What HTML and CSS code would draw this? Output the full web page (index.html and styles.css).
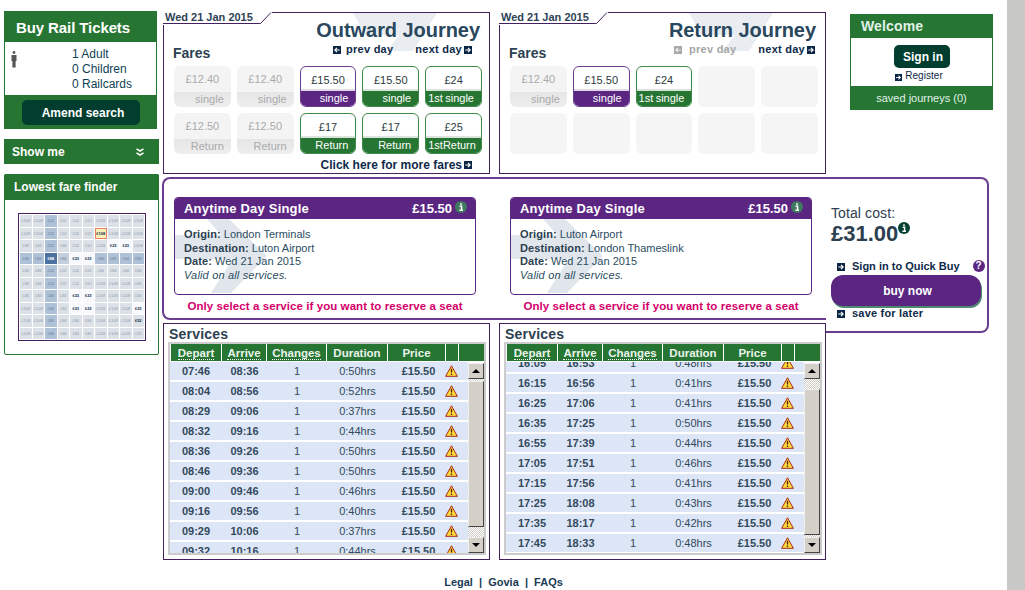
FILE: index.html
```html
<!DOCTYPE html>
<html lang="en">
<head>
<meta charset="utf-8">
<title>Buy Rail Tickets</title>
<link rel="stylesheet" href="styles.css">
</head>
<body>
<svg class="defs" width="0" height="0" aria-hidden="true">
  <symbol id="arrow" viewBox="0 0 9 9"><rect width="9" height="9" fill="#0b2545"/><path d="M1.5 4.5H6M4.5 2.2 6.9 4.5 4.5 6.8" fill="none" stroke="#fff" stroke-width="1.3"/></symbol>
  <symbol id="arrow-l" viewBox="0 0 9 9"><rect width="9" height="9" fill="#0b2545"/><path d="M7.5 4.5H3M4.5 2.2 2.1 4.5 4.5 6.8" fill="none" stroke="#fff" stroke-width="1.3"/></symbol>
  <symbol id="arrow-off" viewBox="0 0 9 9"><rect width="9" height="9" fill="#a8a8a8"/><path d="M7.5 4.5H3M4.5 2.2 2.1 4.5 4.5 6.8" fill="none" stroke="#eee" stroke-width="1.3"/></symbol>
  <symbol id="warn" viewBox="0 0 13 12"><path d="M6.5 .8 12.4 11.3H.6Z" fill="#ffdc3c" stroke="#a5281c" stroke-width="1" stroke-linejoin="round"/><path d="M6.5 3.8V7.6M6.5 8.6V10" stroke="#5a2010" stroke-width="1.4"/></symbol>
  <symbol id="info-g" viewBox="0 0 12 12"><circle cx="6" cy="6" r="6" fill="#3f7a5f"/><path d="M6 2.2V4M4.6 5.2H6.6V9M4.4 9.2H8" fill="none" stroke="#fff" stroke-width="1.5"/></symbol>
  <symbol id="info-d" viewBox="0 0 12 12"><circle cx="6" cy="6" r="6" fill="#01412f"/><path d="M6 2.2V4M4.6 5.2H6.6V9M4.4 9.2H8" fill="none" stroke="#fff" stroke-width="1.5"/></symbol>
  <symbol id="mark-card" viewBox="0 0 92 76"><path d="M0 16H46L32 0H54L92 37 56 74H36L58 40H0Z" fill="#e1e6ed"/></symbol>
  <symbol id="mark-top" viewBox="0 0 84 38"><path d="M0 0H84L60 38H34L46 22H12Z" fill="#e9edf2"/></symbol>
</svg>

<div class="page">
  <aside class="left">
    <section class="buy">
      <h2 class="buy-title">Buy Rail Tickets</h2>
      <div class="buy-body">
        <svg class="person" width="6" height="17" viewBox="0 0 6 17"><circle cx="3" cy="1.5" r="1.4" fill="#555"/><path d="M.5 4H5.5V10H4.6V16.5H1.4V10H.5Z" fill="#555"/></svg>
        <ul class="party"><li>1 Adult</li><li>0 Children</li><li>0 Railcards</li></ul>
      </div>
      <a class="btn amend">Amend search</a>
    </section>
    <section class="showme">
      <span>Show me</span>
      <svg width="8" height="8" viewBox="0 0 8 8"><path d="M.5 .8 4 3 7.5 .8M.5 4.8 4 7 7.5 4.8" fill="none" stroke="#fff" stroke-width="1.5"/></svg>
    </section>
    <section class="finder">
      <h3 class="finder-title">Lowest fare finder</h3>
      <div class="finder-body">
        <div class="matrix">
          <i>£108</i><i>£108</i><i class="m">£52</i><i>£52</i><i>£52</i><i>£52</i><i>£108</i><i>£108</i><i>£108</i><i>£108</i>
          <i>£108</i><i>£108</i><i class="m">£52</i><i>£52</i><i>£52</i><i>£52</i><i class="s">£108</i><i>£108</i><i>£108</i><i>£108</i>
          <i>£84</i><i>£84</i><i class="m">£52</i><i>£84</i><i>£52</i><i>£52</i><i>£108</i><i class="w">£23</i><i class="w">£23</i><i>£108</i>
          <i class="m">£84</i><i class="m">£84</i><i class="d">£84</i><i class="m2">£84</i><i class="w">£23</i><i class="w">£23</i><i class="m">£84</i><i class="m">£84</i><i class="m">£84</i><i class="m">£84</i>
          <i>£84</i><i>£84</i><i class="m">£52</i><i>£52</i><i>£52</i><i>£52</i><i>£84</i><i>£84</i><i>£84</i><i>£84</i>
          <i>£84</i><i>£84</i><i class="m">£52</i><i>£52</i><i>£52</i><i>£52</i><i>£108</i><i>£108</i><i>£108</i><i>£84</i>
          <i>£84</i><i>£84</i><i class="m">£84</i><i>£84</i><i class="w">£23</i><i class="w">£23</i><i>£108</i><i>£108</i><i>£108</i><i>£84</i>
          <i>£108</i><i>£108</i><i class="m">£84</i><i>£84</i><i class="w">£23</i><i class="w">£23</i><i>£108</i><i>£108</i><i>£108</i><i class="w">£23</i>
          <i>£108</i><i>£108</i><i class="m">£84</i><i>£84</i><i>£84</i><i>£84</i><i>£108</i><i>£108</i><i>£108</i><i class="w2">£52</i>
          <i>£108</i><i>£108</i><i class="m">£84</i><i>£84</i><i>£84</i><i>£84</i><i>£108</i><i>£108</i><i>£108</i><i>£52</i>
        </div>
      </div>
    </section>
  </aside>

  <div class="journeys">
    <section class="journey out">
      <svg class="mark-top" width="84" height="38"><use href="#mark-top"/></svg>
      <div class="tab"><svg class="tab-line" width="109" height="13" viewBox="0 0 109 13"><path d="M0 11.5H97.5L108 .5" fill="none" stroke="#45205f"/></svg><span>Wed 21 Jan 2015</span></div>
      <div class="j-head">
        <h3 class="fares">Fares</h3>
        <div class="j-right">
          <h2 class="j-title">Outward Journey</h2>
          <div class="daynav">
            <a class="day"><svg class="ar"><use href="#arrow-l"/></svg>prev day</a>
            <a class="day">next day<svg class="ar"><use href="#arrow"/></svg></a>
          </div>
        </div>
      </div>
      <div class="tiles">
        <div class="tile off"><b>£12.40</b><span class="band">single</span></div>
        <div class="tile off"><b>£12.40</b><span class="band">single</span></div>
        <div class="tile sel"><b>£15.50</b><span class="band">single</span></div>
        <div class="tile on"><b>£15.50</b><span class="band">single</span></div>
        <div class="tile on"><b>£24</b><span class="band two"><em>1st</em><em>single</em></span></div>
        <div class="tile off"><b>£12.50</b><span class="band">Return</span></div>
        <div class="tile off"><b>£12.50</b><span class="band">Return</span></div>
        <div class="tile on"><b>£17</b><span class="band">Return</span></div>
        <div class="tile on"><b>£17</b><span class="band">Return</span></div>
        <div class="tile on"><b>£25</b><span class="band two"><em>1st</em><em>Return</em></span></div>
      </div>
      <a class="more">Click here for more fares<svg class="ar"><use href="#arrow"/></svg></a>
    </section>

    <section class="journey ret">
      <svg class="mark-top" width="84" height="38"><use href="#mark-top"/></svg>
      <div class="tab"><svg class="tab-line" width="109" height="13" viewBox="0 0 109 13"><path d="M0 11.5H97.5L108 .5" fill="none" stroke="#45205f"/></svg><span>Wed 21 Jan 2015</span></div>
      <div class="j-head">
        <h3 class="fares">Fares</h3>
        <div class="j-right">
          <h2 class="j-title">Return Journey</h2>
          <div class="daynav">
            <a class="day dis"><svg class="ar"><use href="#arrow-off"/></svg>prev day</a>
            <a class="day">next day<svg class="ar"><use href="#arrow"/></svg></a>
          </div>
        </div>
      </div>
      <div class="tiles">
        <div class="tile off"><b>£12.40</b><span class="band">single</span></div>
        <div class="tile sel"><b>£15.50</b><span class="band">single</span></div>
        <div class="tile on"><b>£24</b><span class="band two"><em>1st</em><em>single</em></span></div>
        <div class="tile none"></div>
        <div class="tile none"></div>
        <div class="tile none"></div>
        <div class="tile none"></div>
        <div class="tile none"></div>
        <div class="tile none"></div>
        <div class="tile none"></div>
      </div>
    </section>
  </div>

  <section class="welcome">
    <h3 class="welcome-title">Welcome</h3>
    <div class="welcome-body">
      <a class="btn signin">Sign in</a>
      <a class="register"><svg class="ar"><use href="#arrow"/></svg>Register</a>
    </div>
    <div class="saved">saved journeys (0)</div>
  </section>

  <div class="summary">
    <div class="tickets">
      <div class="ticket">
        <div class="card">
          <svg class="mark-card" width="92" height="76"><use href="#mark-card"/></svg>
          <div class="card-head"><span>Anytime Day Single</span><span class="card-price">£15.50<svg class="inf"><use href="#info-g"/></svg></span></div>
          <div class="card-body">
            <p><b>Origin:</b> London Terminals</p>
            <p><b>Destination:</b> Luton Airport</p>
            <p><b>Date:</b> Wed 21 Jan 2015</p>
            <p><i>Valid on all services.</i></p>
          </div>
        </div>
        <p class="notice">Only select a service if you want to reserve a seat</p>
      </div>
      <div class="ticket">
        <div class="card">
          <svg class="mark-card" width="92" height="76"><use href="#mark-card"/></svg>
          <div class="card-head"><span>Anytime Day Single</span><span class="card-price">£15.50<svg class="inf"><use href="#info-g"/></svg></span></div>
          <div class="card-body">
            <p><b>Origin:</b> Luton Airport</p>
            <p><b>Destination:</b> London Thameslink</p>
            <p><b>Date:</b> Wed 21 Jan 2015</p>
            <p><i>Valid on all services.</i></p>
          </div>
        </div>
        <p class="notice">Only select a service if you want to reserve a seat</p>
      </div>
    </div>
    <div class="checkout">
      <p class="total-label">Total cost:</p>
      <p class="total">£31.00<svg class="inf-big"><use href="#info-d"/></svg></p>
      <div class="quick"><svg class="ar"><use href="#arrow"/></svg><a>Sign in to Quick Buy</a><span class="help">?</span></div>
      <a class="buynow">buy now</a>
      <div class="later"><svg class="ar"><use href="#arrow"/></svg><a>save for later</a></div>
    </div>
  </div>

  <div class="services-row">
    <section class="services">
      <h3 class="services-title">Services</h3>
      <div class="frame">
        <div class="thead"><span><u>Depart</u></span><span><u>Arrive</u></span><span><u>Changes</u></span><span>Duration</span><span>Price</span><span></span><span></span></div>
        <div class="tbody">
          <div class="rows">
            <div class="row"><b>07:46</b><b>08:36</b><span>1</span><span>0:50hrs</span><b class="pr">£15.50</b><svg class="warn"><use href="#warn"/></svg></div>
            <div class="row"><b>08:04</b><b>08:56</b><span>1</span><span>0:52hrs</span><b class="pr">£15.50</b><svg class="warn"><use href="#warn"/></svg></div>
            <div class="row"><b>08:29</b><b>09:06</b><span>1</span><span>0:37hrs</span><b class="pr">£15.50</b><svg class="warn"><use href="#warn"/></svg></div>
            <div class="row"><b>08:32</b><b>09:16</b><span>1</span><span>0:44hrs</span><b class="pr">£15.50</b><svg class="warn"><use href="#warn"/></svg></div>
            <div class="row"><b>08:36</b><b>09:26</b><span>1</span><span>0:50hrs</span><b class="pr">£15.50</b><svg class="warn"><use href="#warn"/></svg></div>
            <div class="row"><b>08:46</b><b>09:36</b><span>1</span><span>0:50hrs</span><b class="pr">£15.50</b><svg class="warn"><use href="#warn"/></svg></div>
            <div class="row"><b>09:00</b><b>09:46</b><span>1</span><span>0:46hrs</span><b class="pr">£15.50</b><svg class="warn"><use href="#warn"/></svg></div>
            <div class="row"><b>09:16</b><b>09:56</b><span>1</span><span>0:40hrs</span><b class="pr">£15.50</b><svg class="warn"><use href="#warn"/></svg></div>
            <div class="row"><b>09:29</b><b>10:06</b><span>1</span><span>0:37hrs</span><b class="pr">£15.50</b><svg class="warn"><use href="#warn"/></svg></div>
            <div class="row"><b>09:32</b><b>10:16</b><span>1</span><span>0:44hrs</span><b class="pr">£15.50</b><svg class="warn"><use href="#warn"/></svg></div>
          </div>
          <div class="sbar at-top">
            <span class="sbtn"><span class="up"></span></span>
            <span class="thumb"></span>
            <span class="sbtn"><span class="down"></span></span>
          </div>
        </div>
      </div>
    </section>
    <section class="services">
      <h3 class="services-title">Services</h3>
      <div class="frame">
        <div class="thead"><span><u>Depart</u></span><span><u>Arrive</u></span><span><u>Changes</u></span><span>Duration</span><span>Price</span><span></span><span></span></div>
        <div class="tbody">
          <div class="rows scrolled">
            <div class="row"><b>16:05</b><b>16:53</b><span>1</span><span>0:48hrs</span><b class="pr">£15.50</b><svg class="warn"><use href="#warn"/></svg></div>
            <div class="row"><b>16:15</b><b>16:56</b><span>1</span><span>0:41hrs</span><b class="pr">£15.50</b><svg class="warn"><use href="#warn"/></svg></div>
            <div class="row"><b>16:25</b><b>17:06</b><span>1</span><span>0:41hrs</span><b class="pr">£15.50</b><svg class="warn"><use href="#warn"/></svg></div>
            <div class="row"><b>16:35</b><b>17:25</b><span>1</span><span>0:50hrs</span><b class="pr">£15.50</b><svg class="warn"><use href="#warn"/></svg></div>
            <div class="row"><b>16:55</b><b>17:39</b><span>1</span><span>0:44hrs</span><b class="pr">£15.50</b><svg class="warn"><use href="#warn"/></svg></div>
            <div class="row"><b>17:05</b><b>17:51</b><span>1</span><span>0:46hrs</span><b class="pr">£15.50</b><svg class="warn"><use href="#warn"/></svg></div>
            <div class="row"><b>17:15</b><b>17:56</b><span>1</span><span>0:41hrs</span><b class="pr">£15.50</b><svg class="warn"><use href="#warn"/></svg></div>
            <div class="row"><b>17:25</b><b>18:08</b><span>1</span><span>0:43hrs</span><b class="pr">£15.50</b><svg class="warn"><use href="#warn"/></svg></div>
            <div class="row"><b>17:35</b><b>18:17</b><span>1</span><span>0:42hrs</span><b class="pr">£15.50</b><svg class="warn"><use href="#warn"/></svg></div>
            <div class="row"><b>17:45</b><b>18:33</b><span>1</span><span>0:48hrs</span><b class="pr">£15.50</b><svg class="warn"><use href="#warn"/></svg></div>
          </div>
          <div class="sbar at-end">
            <span class="sbtn"><span class="up"></span></span>
            <span class="thumb"></span>
            <span class="sbtn"><span class="down"></span></span>
          </div>
        </div>
      </div>
    </section>
  </div>

  <footer class="foot"><a>Legal</a> &nbsp;|&nbsp; <a>Govia</a> &nbsp;|&nbsp; <a>FAQs</a></footer>
</div>
<div class="rail"></div>
</body>
</html>
```

FILE: styles.css
```css
* { box-sizing: border-box; }
html, body { margin: 0; height: 590px; overflow: hidden; }
body { display: flex; background: #fff; font-family: "Liberation Sans", Arial, sans-serif; font-size: 11px; color: #2b4153; }
h2, h3, p, ul { margin: 0; padding: 0; }
ul { list-style: none; }
.defs { position: absolute; }
.rail { width: 18px; height: 590px; background: #c8c9c6; }
.page { width: 1007px; height: 590px; padding: 11px 0 0 4px; display: grid; grid-template-columns: 158px 664px 1fr; grid-template-rows: auto auto auto auto; align-content: start; }
.ar { width: 8px; height: 8px; flex: none; }

/* left column */
.left { grid-column: 1; grid-row: 1 / 5; width: 155px; }
.buy { width: 153px; height: 118px; background: #277533; }
.buy-title { height: 31px; padding-left: 12px; font-size: 15px; letter-spacing: -.1px; line-height: 34px; color: #fff; }
.buy-body { margin: 0 1px; height: 53px; background: #fff; display: flex; padding: 8px 0 0 6px; }
.person { margin-top: 1px; }
.party { margin-left: 55px; font-size: 12px; line-height: 15px; color: #0f3f55; margin-top: -3px; }
.btn { display: flex; align-items: center; justify-content: center; background: #013e30; color: #fff; font-weight: bold; font-size: 12px; border-radius: 5px; }
.amend { width: 118px; height: 25px; margin: 5px 0 0 18px; padding-left: 4px; }
.showme { margin-top: 10px; height: 25px; background: #277533; color: #fff; font-size: 12px; font-weight: bold; display: flex; align-items: center; justify-content: space-between; padding: 0 15px 0 8px; }
.finder { margin-top: 10px; height: 181px; border: 1px solid #277533; border-radius: 2px; }
.finder-title { height: 26px; margin: -1px -1px 0; background: #277533; color: #fff; font-size: 12px; line-height: 26px; padding-left: 10px; border-radius: 2px 2px 0 0; }
.finder-body { padding: 13px 0 0 13px; }
.matrix { width: 128px; height: 128px; border: 1px solid #45205f; padding: 1px; display: grid; grid-template-columns: repeat(10, 1fr); grid-template-rows: repeat(10, 1fr); gap: 1px; }
.matrix i { font-style: normal; font-size: 4px; line-height: 11px; text-align: center; background: #dce1e7; color: #8e9cae; overflow: hidden; }
.matrix .m { background: #aec1d6; color: #6b8099; }
.matrix .m2 { background: #c3cfdd; color: #6a7f97; }
.matrix .d { background: #4d72a2; color: #fff; font-weight: bold; }
.matrix .w { background: #f7f9fc; color: #0e2a4a; font-weight: bold; }
.matrix .w2 { background: #dce1e7; color: #0e2a4a; font-weight: bold; }
.matrix .s { background: #f5f1b8; color: #0e2a4a; font-weight: bold; outline: 1px solid #e8825f; outline-offset: -1px; }

/* journey panels */
.journeys { grid-column: 2; grid-row: 1; margin-top: 1px; padding-left: 1px; display: flex; gap: 9px; }
.journey { position: relative; width: 327px; height: 162px; border: 1px solid #45205f; padding: 0 9px 0 10px; display: flex; flex-direction: column; }
.tab { position: absolute; left: -1px; top: -1px; width: 109px; height: 13px; background: #fff; }
.tab span { position: relative; display: block; padding-left: 2px; font-size: 11px; font-weight: bold; line-height: 10px; color: #2e4356; }
.tab-line { position: absolute; left: 0; top: 0; }
.mark-top { position: absolute; left: 189px; top: 0; }
.j-head { position: relative; height: 53px; display: flex; justify-content: space-between; }
.fares { margin: 32px 0 0 -1px; font-size: 14px; line-height: 16px; color: #2c4050; }
.j-right { display: flex; flex-direction: column; align-items: flex-end; padding-top: 6px; }
.j-title { font-size: 20px; letter-spacing: -.05px; line-height: 23px; color: #29475d; }
.daynav { display: flex; gap: 22px; margin-top: 1px; font-size: 11px; letter-spacing: .25px; font-weight: bold; line-height: 13px; color: #0e2a4a; }
.out .daynav { margin-right: 8px; }
.ret .daynav { margin-right: 1px; }
.day { display: flex; align-items: center; gap: 5px; }
.day:last-child { gap: 2px; }
.dis { color: #a6a6a6; gap: 7px; }
.tiles { position: relative; display: grid; grid-template-columns: repeat(5, 56.8px); grid-auto-rows: 41px; gap: 6px; }
.tile { border-radius: 6px; display: flex; flex-direction: column; overflow: hidden; font-size: 11px; }
.tile b { flex: 1 1 0; min-height: 0; font-weight: normal; text-align: center; line-height: 27px; }
.band { flex: none; height: 15px; line-height: 15px; text-align: right; padding: 0 7px 0 2px; }
.two { display: flex; justify-content: space-between; }
.two em { font-style: normal; }
.off { background: #f4f4f4; }
.off b { color: #aaa; }
.off .band { background: linear-gradient(#e6e6e6, #eee); color: #aaa; }
.on { border: 1px solid #3d8a4a; background: #fff; }
.on b { color: #2b3a40; box-shadow: inset 0 -2px 1px #d9e2da; }
.on .band { background: #277533; color: #fff; }
.sel { border: 1px solid #6b3d8f; background: #fff; }
.sel b { color: #2b3a40; box-shadow: inset 0 -2px 1px #e0d8e6; }
.sel .band { background: #5b2682; color: #fff; }
.none { background: #f5f5f5; }
.more { position: relative; align-self: flex-end; display: flex; align-items: center; gap: 2px; margin: 5px 8px 0 0; font-size: 12px; font-weight: bold; line-height: 12px; color: #0e2a4a; }

/* welcome */
.welcome { grid-column: 3; grid-row: 1; width: 143px; height: 96px; margin: 3px 0 0 24px; background: #277533; }
.welcome-title { height: 24px; padding-left: 11px; font-size: 14px; letter-spacing: .15px; line-height: 25px; color: #e0f2ea; }
.welcome-body { margin: 0 1px; height: 48px; background: #fff; display: flex; flex-direction: column; align-items: center; padding-top: 7px; }
.signin { width: 56px; height: 23px; padding-left: 3px; }
.register { display: flex; align-items: center; gap: 3px; margin: 2px 0 0 -5px; font-size: 10px; letter-spacing: .05px; line-height: 12px; color: #0e2a4a; }
.register .ar { width: 7px; height: 7px; margin-top: 2px; }
.saved { text-align: center; line-height: 24px; color: #e0f2ea; }

/* summary */
.summary { grid-column: 2 / 4; grid-row: 2; margin-top: 3px; display: flex; align-items: flex-start; }
.tickets { width: 664px; height: 143px; border: 2px solid #6b3d8f; border-right: 0; border-radius: 8px 0 0 8px; padding: 18px 0 0 10px; display: flex; gap: 34px; }
.ticket { width: 302px; }
.card { position: relative; height: 98px; border: 1px solid #5b2682; border-radius: 4px; overflow: hidden; }
.mark-card { position: absolute; left: 0; top: 21px; }
.card-head { position: relative; height: 22px; margin: -1px -1px 0; background: #5b2682; color: #fff; font-size: 13px; letter-spacing: .2px; font-weight: bold; line-height: 23px; display: flex; justify-content: space-between; padding: 0 9px 0 10px; }
.card-price { display: flex; align-items: center; gap: 3px; letter-spacing: 0; }
.inf { width: 12px; height: 12px; margin-top: -2px; }
.card-body { position: relative; padding: 9px 0 0 9px; font-size: 11px; line-height: 13.7px; color: #2b4d63; }
.card-body b { color: #2c4050; letter-spacing: .1px; }
.card-body i { letter-spacing: .17px; }
.notice { margin-top: 4px; text-align: center; font-size: 11.5px; letter-spacing: .08px; font-weight: bold; line-height: 14px; color: #d4006a; }
.checkout { width: 163px; height: 156px; border: solid #6b3d8f; border-width: 2px 2px 2px 0; border-radius: 0 8px 8px 0; padding: 27px 0 0 5px; }
.total-label { font-size: 14px; letter-spacing: .1px; line-height: 15px; color: #2c4050; }
.total { display: flex; align-items: flex-start; font-size: 22px; font-weight: bold; line-height: 25px; color: #2c4050; }
.inf-big { width: 12px; height: 12px; margin-top: 1px; }
.quick, .later { display: flex; align-items: center; font-weight: bold; line-height: 13px; color: #0e2a4a; padding-left: 6px; }
.quick { margin-top: 14px; }
.quick a { margin-left: 7px; }
.later { margin-top: 1px; letter-spacing: .2px; }
.later a { margin-left: 7px; }
.help { width: 12px; height: 12px; margin: -1px 0 0 13px; border-radius: 50%; background: #5b2682; color: #fff; font-size: 10px; line-height: 12px; text-align: center; }
.buynow { display: block; width: 150px; height: 31px; margin-top: 2px; padding-left: 3px; border-radius: 12px; background: #5b2682; box-shadow: 1px 2px 0 #4f8a70; color: #fff; font-size: 12px; font-weight: bold; line-height: 32px; text-align: center; }

/* services */
.services-row { grid-column: 2; grid-row: 3; position: relative; margin-top: -10px; padding-left: 1px; display: flex; gap: 9px; }
.services { width: 327px; height: 237px; border: 1px solid #45205f; background: #fff; padding-left: 4px; }
.services-title { padding-left: 1px; font-size: 14px; line-height: 20px; letter-spacing: .2px; color: #2c4050; height: 18px; }
.frame { width: 318px; height: 213px; border: 2px solid #ccc; display: flex; flex-direction: column; }
.thead { display: grid; grid-template-columns: 51px 45px 60px 61px 58px 13px 1fr; height: 17px; margin-left: 1px; background: #277533; color: #eaf3ec; font-size: 11.5px; font-weight: bold; line-height: 17px; text-align: center; }
.thead span { border-right: 1px solid #fff; padding-top: 1px; }
.thead span:last-child { border-right: 0; }
.thead u { text-decoration: none; border-bottom: 1px dotted #fff; }
.tbody { flex: 1; margin-top: 1px; display: flex; overflow: hidden; }
.rows { width: 298px; }
.rows.scrolled { margin-top: -8px; }
.row { display: grid; grid-template-columns: 52px 45px 60px 61px 58px 1fr; align-items: center; height: 18px; margin-bottom: 2px; background: #dde6f7; text-align: center; line-height: 18px; color: #33495c; }
.pr { padding-left: 3px; }
.warn { width: 13px; height: 12px; margin-left: -1px; }
.sbar { width: 16px; margin-top: 1px; display: flex; flex-direction: column; background: repeating-conic-gradient(#fff 0 25%, #cfccc5 0 50%) 0 0 / 2px 2px; }
.sbtn { height: 16px; flex: none; background: #d4d0c8; border: 1px solid; border-color: #eee #444 #444 #eee; display: flex; align-items: center; justify-content: center; }
.up { border: 4px solid transparent; border-top: 0; border-bottom: 4px solid #000; }
.down { border: 4px solid transparent; border-bottom: 0; border-top: 4px solid #000; }
.thumb { background: #d4d0c8; border: 1px solid; border-color: #eee #444 #444 #eee; }
.at-top .thumb { height: 146px; margin: 2px 0 10px; }
.at-end .thumb { height: 146px; margin: 10px 0 2px; }

/* footer */
.foot { grid-column: 2; grid-row: 4; margin-top: 15px; padding-left: 19px; text-align: center; font-weight: bold; line-height: 14px; color: #1b3a55; }
```
